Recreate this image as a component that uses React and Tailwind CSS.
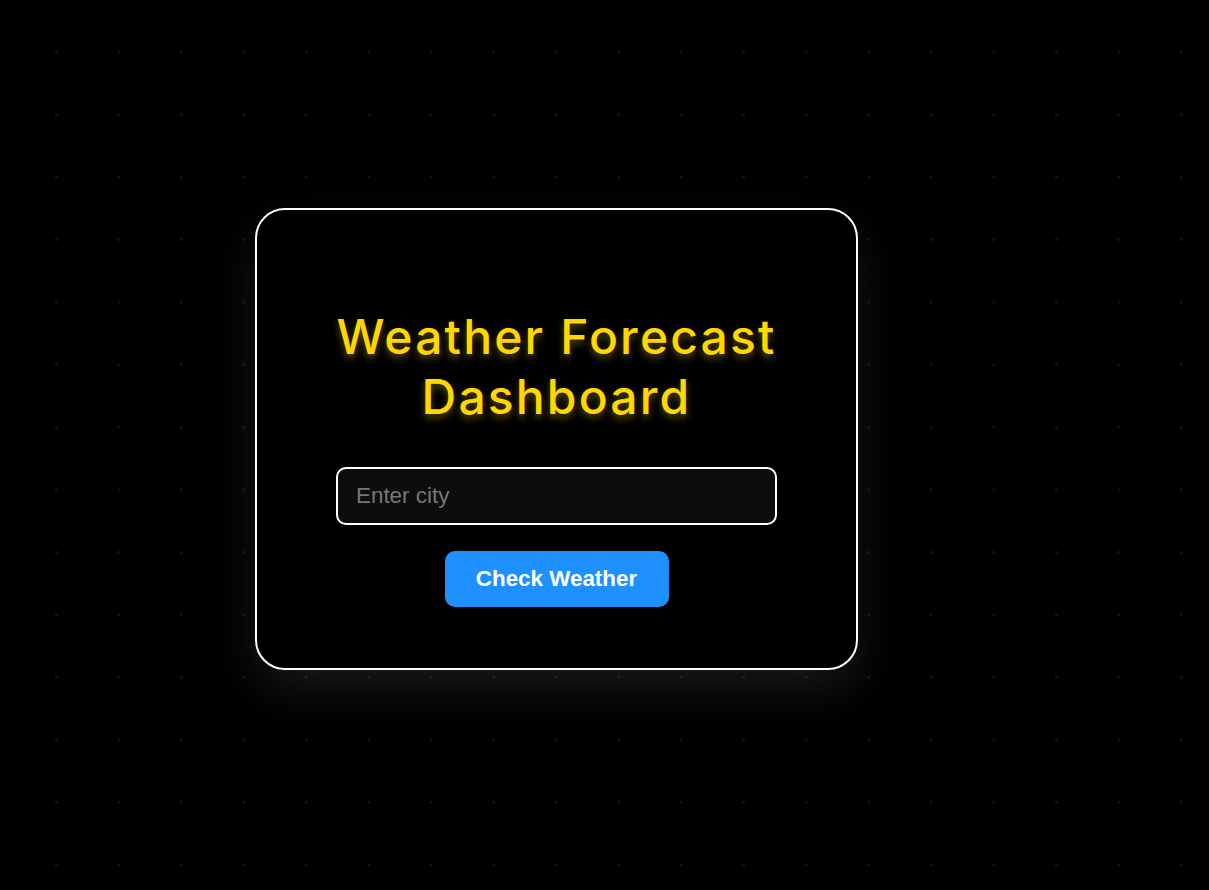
export default function App() {
  return (
    <div className="min-h-[890px] w-full bg-black bg-[radial-gradient(circle,#171717_1px,transparent_1.6px)] bg-[size:62.5px_62.5px] bg-[position:25px_21px] pt-[208px] pl-[255px]">
      <div className="w-[603px] h-[462px] rounded-[30px] border-2 border-white bg-black px-[79px] pt-[97px] shadow-[0_20px_45px_rgba(255,255,255,0.09)] flex flex-col items-center">
        <h1 className="whitespace-nowrap text-[48px] leading-[60px] text-center text-[#FFD700] font-medium font-['Inter',sans-serif] tracking-[0.045em] [text-shadow:0_4px_7px_rgba(255,215,0,0.35)]">
          Weather Forecast
          <br />
          Dashboard
        </h1>
        <input
          type="text"
          placeholder="Enter city"
          className="mt-[40px] w-[441px] h-[58px] rounded-[10px] border-2 border-white bg-[#0d0d0d] px-[18px] text-[22.4px] text-white placeholder:text-[#777] font-['Liberation_Sans',sans-serif] outline-none"
        />
        <button className="mt-[26px] w-[224px] h-[56px] rounded-[10px] bg-[#1E90FF] text-white text-[22.4px] font-bold font-['Liberation_Sans',sans-serif]">
          Check Weather
        </button>
      </div>
    </div>
  );
}
